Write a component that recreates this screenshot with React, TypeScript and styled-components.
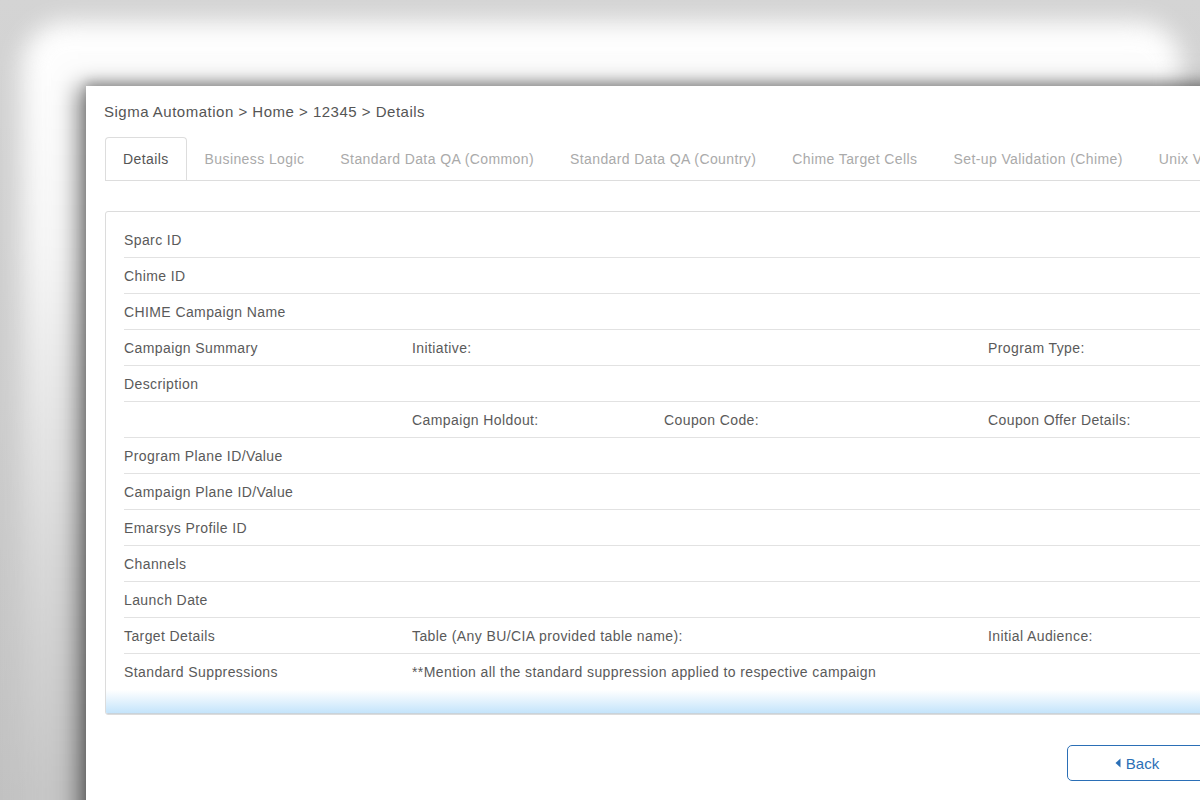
import styled, { createGlobalStyle } from "styled-components";

const GlobalStyle = createGlobalStyle`
  html, body {
    margin: 0;
    padding: 0;
  }
  body {
    font-family: "Liberation Sans", Arial, sans-serif;
  }
`;

const tabs = [
  "Details",
  "Business Logic",
  "Standard Data QA (Common)",
  "Standard Data QA (Country)",
  "Chime Target Cells",
  "Set-up Validation (Chime)",
  "Unix Validation",
];

type Row = { label: string; cells?: [string, string, string] };

const rows: Row[] = [
  { label: "Sparc ID" },
  { label: "Chime ID" },
  { label: "CHIME Campaign Name" },
  { label: "Campaign Summary", cells: ["Initiative:", "", "Program Type:"] },
  { label: "Description" },
  { label: "", cells: ["Campaign Holdout:", "Coupon Code:", "Coupon Offer Details:"] },
  { label: "Program Plane ID/Value" },
  { label: "Campaign Plane ID/Value" },
  { label: "Emarsys Profile ID" },
  { label: "Channels" },
  { label: "Launch Date" },
  { label: "Target Details", cells: ["Table (Any BU/CIA provided table name):", "", "Initial Audience:"] },
  {
    label: "Standard Suppressions",
    cells: ["**Mention all the standard suppression applied to respective campaign", "", ""],
  },
];

function App() {
  return (
    <>
      <GlobalStyle />
      <Desktop>
        <BackWindow />
        <Window>
          <Breadcrumb>Sigma Automation &gt; Home &gt; 12345 &gt; Details</Breadcrumb>
          <TabBar>
            {tabs.map((t, i) => (
              <Tab key={t} $active={i === 0}>
                {t}
              </Tab>
            ))}
          </TabBar>
          <DetailsBox>
            {rows.map((r, i) => (
              <DetailRow key={i} $last={i === rows.length - 1}>
                <Cell>{r.label}</Cell>
                {r.cells && r.cells[0].startsWith("**") ? (
                  <WideCell>{r.cells[0]}</WideCell>
                ) : (
                  <>
                    <Cell>{r.cells?.[0]}</Cell>
                    <Cell>{r.cells?.[1]}</Cell>
                    <Cell>{r.cells?.[2]}</Cell>
                  </>
                )}
              </DetailRow>
            ))}
            <BoxFooter />
          </DetailsBox>
          <Actions>
            <BackButton type="button">
              <svg width="6" height="10" viewBox="0 0 6 10">
                <path d="M5.5 0.5 L0.5 5 L5.5 9.5 Z" fill="currentColor" />
              </svg>
              Back
            </BackButton>
          </Actions>
        </Window>
      </Desktop>
    </>
  );
}

export default App;

const Desktop = styled.div`
  position: relative;
  width: 1200px;
  height: 800px;
  overflow: hidden;
  background: linear-gradient(180deg, #d4d4d4 0%, #cdcdcd 50%, #c2c2c2 100%);
`;

const BackWindow = styled.div`
  position: absolute;
  left: 22px;
  top: 22px;
  width: 1160px;
  height: 900px;
  border-radius: 44px;
  background: linear-gradient(180deg, #ffffff 0%, #f6f6f6 25%, #d8d8d8 60%, #c6c6c6 85%);
  filter: blur(12px);
`;

const Window = styled.div`
  position: absolute;
  left: 86px;
  top: 86px;
  width: 1140px;
  height: 760px;
  box-sizing: border-box;
  padding: 16px 19px 0 19px;
  background: #fff;
  box-shadow: -8px 0 22px rgba(0, 0, 0, 0.5), 0 -4px 10px rgba(0, 0, 0, 0.18);
`;

const Breadcrumb = styled.div`
  font-size: 15px;
  letter-spacing: 0.5px;
  color: #555;
  line-height: 20px;
  margin-left: -1px;
`;

const TabBar = styled.div`
  display: flex;
  margin-top: 15px;
  height: 43px;
  border-bottom: 1px solid #dddddd;
  white-space: nowrap;
  overflow: hidden;
`;

const Tab = styled.div<{ $active?: boolean }>`
  flex: none;
  display: flex;
  align-items: center;
  padding: 0 17px 1px;
  font-size: 14px;
  letter-spacing: 0.4px;
  color: ${(p) => (p.$active ? "#555" : "#aaa")};
  border: 1px solid ${(p) => (p.$active ? "#dddddd" : "transparent")};
  border-bottom: none;
  border-radius: 4px 4px 0 0;
  background: #fff;
  margin-bottom: -1px;
`;

const DetailsBox = styled.div`
  margin-top: 30px;
  border: 1px solid #dcdcdc;
  border-radius: 3px;
  padding: 10px 0 0 18px;
  overflow: hidden;
`;

const DetailRow = styled.div<{ $last?: boolean }>`
  display: grid;
  grid-template-columns: 288px 252px 324px 1fr;
  height: 36px;
  align-items: center;
  border-bottom: ${(p) => (p.$last ? "none" : "1px solid #e2e2e2")};
  box-sizing: border-box;
  font-size: 14px;
  letter-spacing: 0.4px;
  color: #5a5a5a;
`;

const Cell = styled.div`
  white-space: nowrap;
`;

const WideCell = styled.div`
  grid-column: 2 / span 3;
  white-space: nowrap;
`;

const BoxFooter = styled.div`
  height: 23px;
  margin-left: -18px;
  background: linear-gradient(180deg, #ffffff 0%, #c4e4fb 100%);
  border-bottom: 1px solid #c9d3da;
`;

const Actions = styled.div`
  display: flex;
  justify-content: flex-end;
  margin-top: 30px;
`;

const BackButton = styled.button`
  display: flex;
  align-items: center;
  justify-content: center;
  gap: 5px;
  width: 140px;
  height: 36px;
  border: 1px solid #2b6fb6;
  border-radius: 5px;
  background: #fff;
  color: #2b6fb6;
  font-family: "Liberation Sans", Arial, sans-serif;
  font-size: 15px;
  padding: 0;
`;
